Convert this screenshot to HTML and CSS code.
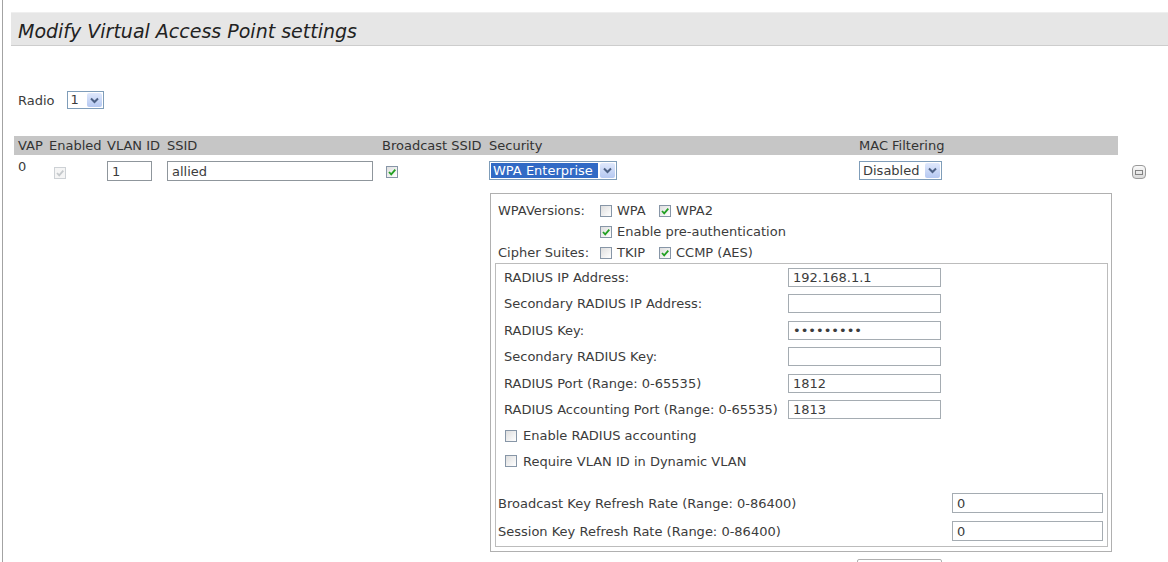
FILE: index.html
```html
<!DOCTYPE html>
<html lang="en">
<head>
	<meta charset="UTF-8">
	<title>Modify Virtual Access Point settings</title>
	<link rel="stylesheet" href="styles.css">
</head>
<body>
<div class="page">
	<h1 class="title">Modify Virtual Access Point settings</h1>

	<div class="radio-row">
		<span class="lbl">Radio</span>
		<span class="sel sel-radio"><span class="sel-val">1</span><span class="sel-btn"><svg viewBox="0 0 9 7"><path d="M1 1.5L4.5 5L8 1.5"/></svg></span></span>
	</div>

	<div class="vap">
		<div class="hd">VAP</div>
		<div class="hd">Enabled</div>
		<div class="hd">VLAN ID</div>
		<div class="hd">SSID</div>
		<div class="hd">Broadcast SSID</div>
		<div class="hd">Security</div>
		<div class="hd">MAC Filtering</div>
		<div class="hd hd-none"></div>

		<div class="td td-num">0</div>
		<div class="td"><span class="cb cb-dis cb-enabled"><svg viewBox="0 0 10 10"><path d="M2 5L4.2 7.3L8.3 2.6"/></svg></span></div>
		<div class="td"><input class="inp inp-vlan" type="text" value="1"></div>
		<div class="td"><input class="inp inp-ssid" type="text" value="allied"></div>
		<div class="td"><span class="cb cb-on cb-bcast"><svg viewBox="0 0 10 10"><path d="M2 5L4.2 7.3L8.3 2.6"/></svg></span></div>
		<div class="td"><span class="sel sel-sec sel-hl"><span class="sel-val">WPA Enterprise</span><span class="sel-btn"><svg viewBox="0 0 9 7"><path d="M1 1.5L4.5 5L8 1.5"/></svg></span></span></div>
		<div class="td"><span class="sel sel-mac"><span class="sel-val">Disabled</span><span class="sel-btn"><svg viewBox="0 0 9 7"><path d="M1 1.5L4.5 5L8 1.5"/></svg></span></span></div>
		<div class="td"><span class="minus"></span></div>

		<div class="sec">
			<div class="wpa-row">
				<span class="wlbl">WPAVersions:</span>
				<span class="opt opt-first"><span class="cb"></span>WPA</span>
				<span class="opt"><span class="cb cb-on"><svg viewBox="0 0 10 10"><path d="M2 5L4.2 7.3L8.3 2.6"/></svg></span>WPA2</span>
			</div>
			<div class="wpa-row">
				<span class="wlbl"></span>
				<span class="opt"><span class="cb cb-on"><svg viewBox="0 0 10 10"><path d="M2 5L4.2 7.3L8.3 2.6"/></svg></span>Enable pre-authentication</span>
			</div>
			<div class="wpa-row">
				<span class="wlbl">Cipher Suites:</span>
				<span class="opt opt-first"><span class="cb"></span>TKIP</span>
				<span class="opt"><span class="cb cb-on"><svg viewBox="0 0 10 10"><path d="M2 5L4.2 7.3L8.3 2.6"/></svg></span>CCMP (AES)</span>
			</div>

			<div class="radius">
				<div class="r-row"><span class="r-lbl">RADIUS IP Address:</span><input class="inp r-inp" type="text" value="192.168.1.1"></div>
				<div class="r-row"><span class="r-lbl">Secondary RADIUS IP Address:</span><input class="inp r-inp" type="text" value=""></div>
				<div class="r-row"><span class="r-lbl">RADIUS Key:</span><input class="inp r-inp" type="password" value="secretkey"></div>
				<div class="r-row"><span class="r-lbl">Secondary RADIUS Key:</span><input class="inp r-inp" type="text" value=""></div>
				<div class="r-row"><span class="r-lbl">RADIUS Port (Range: 0-65535)</span><input class="inp r-inp" type="text" value="1812"></div>
				<div class="r-row"><span class="r-lbl">RADIUS Accounting Port (Range: 0-65535)</span><input class="inp r-inp" type="text" value="1813"></div>

				<div class="c-row"><span class="cb"></span>Enable RADIUS accounting</div>
				<div class="c-row"><span class="cb"></span>Require VLAN ID in Dynamic VLAN</div>

				<div class="k-row k-first"><span class="k-lbl">Broadcast Key Refresh Rate (Range: 0-86400)</span><input class="inp k-inp" type="text" value="0"></div>
				<div class="k-row"><span class="k-lbl">Session Key Refresh Rate (Range: 0-86400)</span><input class="inp k-inp" type="text" value="0"></div>
			</div>
		</div>

		<div class="btn-stub"></div>
	</div>
</div>
</body>
</html>
```

FILE: styles.css
```css
html,body{margin: 0;padding: 0;background: #fff;}
body{font: 13px "DejaVu Sans", Verdana, sans-serif;color: #3c3c3c;}

.page{height: 562px;box-sizing: border-box;margin-left: 2px;border-left: 1px solid #a3a3a3;padding: 12px 0 0 8px;overflow: hidden;}

.title{margin: 0;height: 34px;box-sizing: border-box;padding: 4px 0 0 7px;background: #e6e6e6;border-top: 1px solid #efefef;border-bottom: 1px solid #cdcdcd;font: italic normal 19px/29px "DejaVu Sans", sans-serif;color: #222;}

.radio-row{display: flex;align-items: center;height: 18px;margin-top: 45px;padding-left: 7px;}
.radio-row .lbl{margin-right: 12px;}

/* fake xp style selects */
.sel{display: flex;height: 18px;box-sizing: border-box;border: 1px solid #7f9db9;background: #fff;}
.sel-val{flex: 1;padding: 0 3px;line-height: 16px;white-space: nowrap;overflow: hidden;}
.sel-btn{flex: none;width: 15px;margin: 1px;border-radius: 2px;background: linear-gradient(#dfe8fc, #b5c8f1);display: flex;align-items: center;justify-content: center;}
.sel-btn svg{width: 9px;height: 7px;}
.sel-btn path{fill: none;stroke: #4d6185;stroke-width: 2;}
.sel-radio{width: 37px;}
.sel-sec{width: 128px;height: 19px;}
.sel-mac{width: 83px;height: 19px;}
.sel-hl .sel-val{margin: 1px;padding: 0 2px;line-height: 15px;background: #316ac5;color: #fff;}
.sel-mac .sel-val{line-height: 17px;}

.vap{display: grid;grid-template-columns: 31px 58px 60px 215px 107px 370px 263px 42px;margin: 27px 0 0 3px;}
.hd{height: 19px;line-height: 19px;padding-left: 4px;background: #c6c6c6;white-space: nowrap;color: #333;}
.hd-none{background: none;}
.td{height: 26px;box-sizing: border-box;padding: 6px 0 0 4px;line-height: 16px;}
.td-num{padding-top: 4px;}

.inp{display: block;box-sizing: border-box;height: 20px;margin: 0;padding: 0 4px;border: 1px solid #a5acb2;background: #fff;font: 13px "DejaVu Sans", sans-serif;color: #3c3c3c;outline: none;}
.inp-vlan{width: 45px;border-color: #8f969c;}
.inp-ssid{width: 206px;border-color: #8f969c;}

.cb{display: inline-block;flex: none;width: 12px;height: 12px;box-sizing: border-box;border: 1px solid #8796a7;background: linear-gradient(135deg, #dedede, #fff);}
.cb svg{display: block;width: 10px;height: 10px;}
.cb path{fill: none;stroke: #22a022;stroke-width: 1.8;}
.cb-dis{border-color: #cdd1d5;background: #f5f5f5;}
.cb-dis path{stroke: #c5c9cc;}
.cb-enabled{display: block;margin: 6px 0 0 5px;}
.cb-bcast{display: block;margin: 5px 0 0 4px;}

.minus{display: block;width: 14px;height: 14px;box-sizing: border-box;margin: 4px 0 0 10px;border: 1px solid #9a9a9a;border-radius: 4px;background: linear-gradient(#fafafa, #dadada);}
.minus::after{content: "";display: block;width: 6px;height: 3px;margin: 4px auto 0;border: 1px solid #828282;}

/* security settings box */
.sec{grid-column: 6 / span 3;justify-self: start;width: 622px;height: 359px;box-sizing: border-box;margin: 12px 0 0 5px;padding: 6px 3px 4px 4px;border: 1px solid #b0b0b0;}
.wpa-row{display: flex;align-items: center;height: 21px;padding-left: 3px;white-space: nowrap;}
.wlbl{flex: none;width: 102px;}
.opt{display: flex;align-items: center;gap: 5px;}
.opt-first{width: 59px;}

.radius{height: 284px;box-sizing: border-box;border: 1px solid #bcbcbc;}
.r-row{display: flex;align-items: center;height: 26.5px;padding-left: 8px;white-space: nowrap;}
.r-lbl{flex: none;width: 284px;}
.r-inp{width: 153px;height: 19px;}
.c-row{display: flex;align-items: center;gap: 6px;height: 25.5px;padding-left: 9px;}
.k-row{display: flex;align-items: center;height: 28px;padding-left: 2px;white-space: nowrap;}
.k-first{margin-top: 15px;}
.k-lbl{flex: none;width: 454px;}
.k-inp{width: 151px;}

.btn-stub{grid-column: 7;width: 83px;height: 20px;margin: 7px 0 0 2px;border: 1px solid #b0b0b0;border-radius: 2px;}
```
